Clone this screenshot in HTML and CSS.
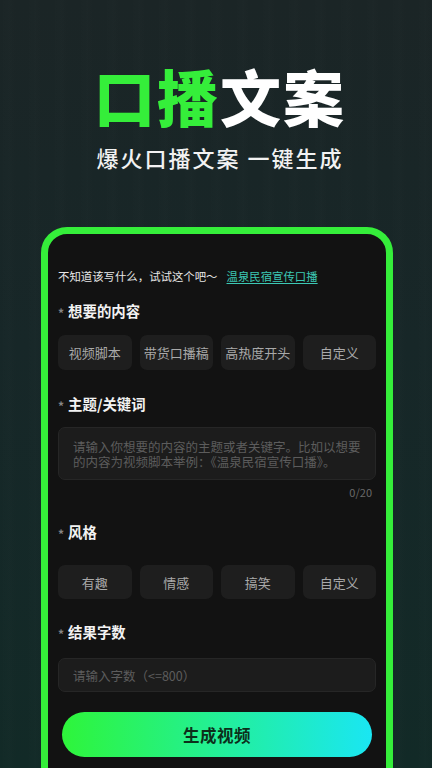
FILE: index.html
```html
<!DOCTYPE html>
<html lang="zh-CN">
<head>
<meta charset="utf-8">
<title>口播文案</title>
<link rel="stylesheet" href="styles.css">
</head>
<body>
<div class="page">
  <header class="hero">
    <h1 class="title"><span class="green">口播</span>文案</h1>
    <p class="subtitle">爆火口播文案 一键生成</p>
  </header>
  <main class="card">
    <p class="hint">不知道该写什么，试试这个吧～<a class="hint-link">温泉民宿宣传口播</a></p>

    <div class="label label-first"><span class="star">*</span>想要的内容</div>
    <div class="chips">
      <div class="chip">视频脚本</div>
      <div class="chip">带货口播稿</div>
      <div class="chip">高热度开头</div>
      <div class="chip">自定义</div>
    </div>

    <div class="label label-topic"><span class="star">*</span>主题/关键词</div>
    <div class="textarea">请输入你想要的内容的主题或者关键字。比如以想要的内容为视频脚本举例：《温泉民宿宣传口播》。</div>
    <div class="count">0/20</div>

    <div class="label label-style"><span class="star">*</span>风格</div>
    <div class="chips chips-style">
      <div class="chip">有趣</div>
      <div class="chip">情感</div>
      <div class="chip">搞笑</div>
      <div class="chip">自定义</div>
    </div>

    <div class="label label-count"><span class="star">*</span>结果字数</div>
    <div class="input">请输入字数（&lt;=800）</div>

    <button class="btn">生成视频</button>
  </main>
</div>
</body>
</html>
```
FILE: styles.css
```css
html, body {
  margin: 0;
  padding: 0;
  height: 768px;
  overflow: hidden;
}
body {
  font-family: "Noto Sans CJK SC", "Noto Sans", sans-serif;
  background:
    repeating-linear-gradient(90deg, rgba(255,255,255,0) 0px, rgba(255,255,255,0.006) 9px, rgba(0,0,0,0.012) 17px, rgba(255,255,255,0) 26px),
    linear-gradient(180deg, #1b2526 0%, #172728 45%, #122a27 100%);
  color: #fff;
}
.page {
  width: 432px;
}
.hero {
  text-align: center;
  padding-top: 66px;
}
.title {
  margin: 0;
  font-size: 61px;
  line-height: 60px;
  font-weight: 900;
  letter-spacing: 2px;
  color: #ffffff;
  padding-left: 8px;
}
.green {
  color: #35ee3a;
}
.subtitle {
  margin: 19px 0 0;
  font-size: 22px;
  line-height: 24px;
  font-weight: 500;
  letter-spacing: 2px;
  color: #f2f2f2;
  padding-left: 8px;
}
.card {
  margin: 58px 0 0 41px;
  border: 7px solid #35ee3a;
  border-radius: 26px;
  background: #121212;
  padding: 34px 10px 40px;
  box-sizing: content-box;
  width: 318px;
}
.hint {
  margin: 0;
  font-size: 11.4px;
  line-height: 16px;
  color: #e6e6e6;
  white-space: nowrap;
}
.hint-link {
  margin-left: 9px;
  color: #3cc8b4;
  text-decoration: underline;
  text-underline-offset: 2px;
}
.label {
  display: flex;
  align-items: center;
  font-size: 14.4px;
  line-height: 20px;
  font-weight: 700;
  color: #f2f2f2;
}
.star {
  font-size: 12px;
  color: #858585;
  margin-right: 4px;
  font-weight: 700;
  line-height: 10px;
  position: relative;
  top: 2px;
}
.label-first { margin-top: 17px; }
.label-topic { margin-top: 24px; }
.label-style { margin-top: 23px; }
.label-count { margin-top: 23px; }
.chips {
  display: grid;
  grid-template-columns: repeat(4, 1fr);
  gap: 8px;
  margin-top: 14px;
}
.chips-style {
  margin-top: 23px;
}
.chip {
  height: 35px;
  border-radius: 7px;
  background: #1e1e1e;
  color: #a9a9a9;
  font-size: 13px;
  display: flex;
  align-items: center;
  justify-content: center;
}
.chips-style .chip {
  height: 34px;
}
.textarea {
  margin-top: 13px;
  height: 53px;
  box-sizing: border-box;
  padding: 0 12px 0 14px;
  border-radius: 7px;
  background: #1c1c1c;
  border: 1px solid #262626;
  color: #5c5c5c;
  font-size: 12.5px;
  line-height: 15px;
  display: flex;
  align-items: center;
}
.count {
  margin-top: 5px;
  text-align: right;
  padding-right: 4px;
  font-size: 11px;
  line-height: 14px;
  color: #6a6a6a;
}
.input {
  margin-top: 16px;
  height: 34px;
  box-sizing: border-box;
  padding: 0 14px;
  border-radius: 7px;
  background: #1c1c1c;
  border: 1px solid #262626;
  color: #5c5c5c;
  font-size: 12.5px;
  display: flex;
  align-items: center;
}
.btn {
  display: block;
  margin: 20px 4px 0;
  width: 310px;
  height: 45px;
  border: none;
  border-radius: 23px;
  background: linear-gradient(90deg, #2ef53a 0%, #22efa0 55%, #1ae6f3 100%);
  font-family: "Noto Sans CJK SC", "Noto Sans", sans-serif;
  font-size: 16.5px;
  font-weight: 700;
  color: #0c2f1a;
  letter-spacing: 0.5px;
}
```
